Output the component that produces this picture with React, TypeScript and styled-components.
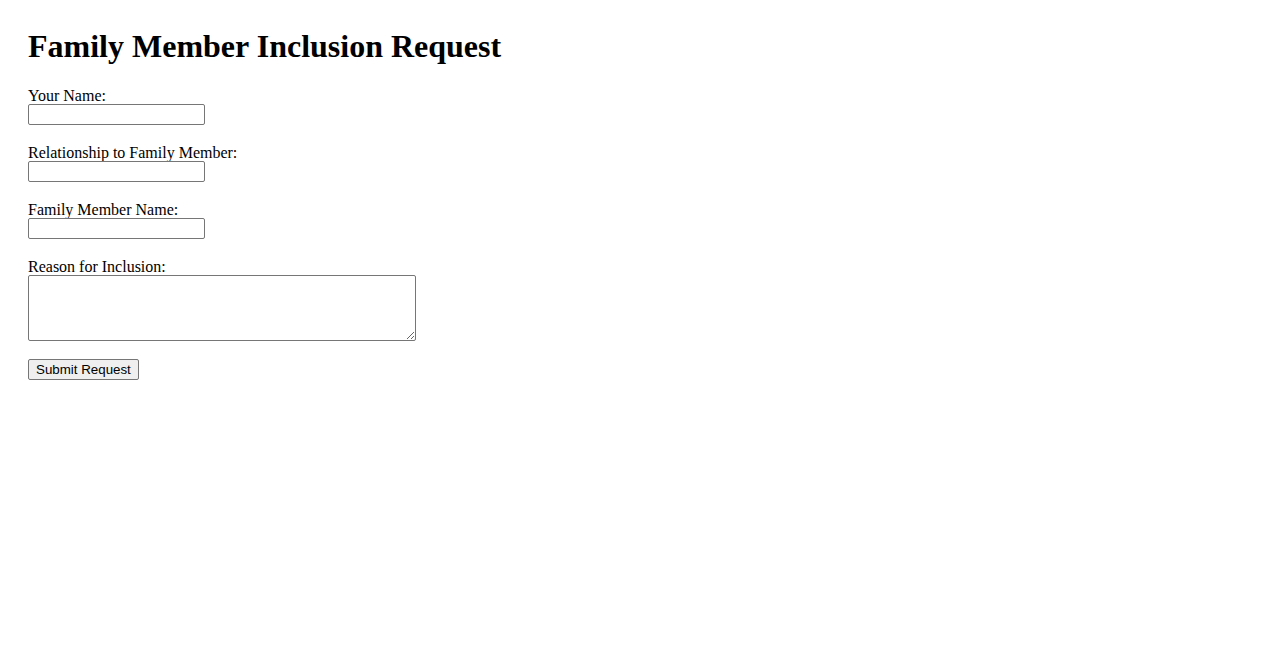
import React, { useState } from 'react';
import styled, { createGlobalStyle } from 'styled-components';

const GlobalStyle = createGlobalStyle`
  body {
    margin: 8px;
    padding: 20px;
    background: #ffffff;
    color: #000000;
    font-family: "Liberation Serif", "Times New Roman", serif;
    font-size: 16px;
  }
`;

const Title = styled.h1`
  margin: 0 0 0.67em;
  font-size: 32px;
  font-weight: bold;
`;

const Form = styled.form`
  display: flex;
  flex-direction: column;
  align-items: flex-start;
`;

const Field = styled.div`
  display: flex;
  flex-direction: column;
  align-items: flex-start;
  margin-bottom: 18px;
`;

const Label = styled.label`
  display: block;
  line-height: 18px;
  padding-top: 1px;
  margin-bottom: -1px;
`;

const TextInput = styled.input`
  box-sizing: border-box;
  width: 177px;
  height: 21px;
  margin: 0;
  padding: 1px 2px;
  border: 1px solid #767676;
  border-radius: 2px;
  font-family: "Liberation Sans", Arial, sans-serif;
  font-size: 13.33px;
`;

const TextArea = styled.textarea`
  box-sizing: border-box;
  width: 388px;
  height: 66px;
  margin: 0;
  padding: 2px;
  border: 1px solid #767676;
  border-radius: 2px;
  font-family: "Liberation Mono", monospace;
  font-size: 13.33px;
`;

const SubmitButton = styled.button`
  box-sizing: border-box;
  height: 21px;
  margin: 0;
  padding: 1px 7px;
  border: 1px solid #767676;
  border-radius: 2px;
  background-color: #efefef;
  color: #000000;
  font-family: "Liberation Sans", Arial, sans-serif;
  font-size: 13.33px;
  cursor: pointer;
`;

const App: React.FC = () => {
  const [formData, setFormData] = useState({
    name: '',
    relationship: '',
    memberName: '',
    reason: '',
  });

  const handleChange = (event: React.ChangeEvent<HTMLInputElement | HTMLTextAreaElement>) => {
    const { name, value } = event.target;
    setFormData({ ...formData, [name]: value });
  };

  const handleSubmit = (event: React.FormEvent<HTMLFormElement>) => {
    event.preventDefault();
    setFormData({ name: '', relationship: '', memberName: '', reason: '' });
  };

  return (
    <>
      <GlobalStyle />
      <Title>Family Member Inclusion Request</Title>
      <Form onSubmit={handleSubmit}>
        <Field>
          <Label htmlFor="name">Your Name:</Label>
          <TextInput type="text" id="name" name="name" value={formData.name} onChange={handleChange} />
        </Field>
        <Field>
          <Label htmlFor="relationship">Relationship to Family Member:</Label>
          <TextInput
            type="text"
            id="relationship"
            name="relationship"
            value={formData.relationship}
            onChange={handleChange}
          />
        </Field>
        <Field>
          <Label htmlFor="memberName">Family Member Name:</Label>
          <TextInput
            type="text"
            id="memberName"
            name="memberName"
            value={formData.memberName}
            onChange={handleChange}
          />
        </Field>
        <Field>
          <Label htmlFor="reason">Reason for Inclusion:</Label>
          <TextArea id="reason" name="reason" value={formData.reason} onChange={handleChange} />
        </Field>
        <SubmitButton type="submit">Submit Request</SubmitButton>
      </Form>
    </>
  );
};

export default App;
